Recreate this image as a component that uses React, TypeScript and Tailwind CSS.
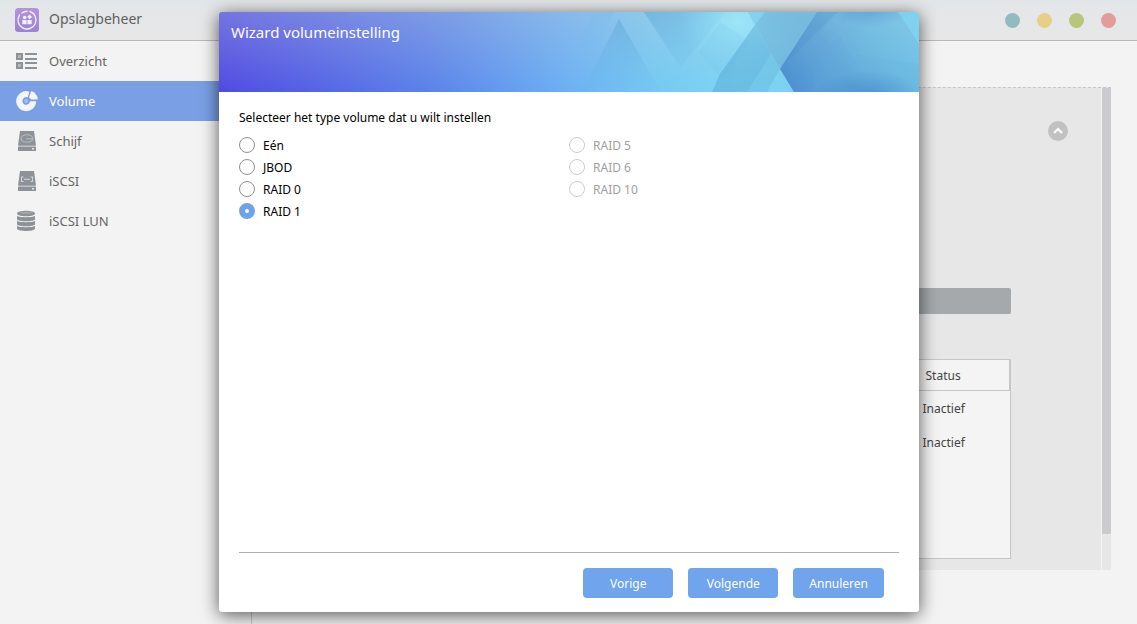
import React, { useState } from 'react';

const NAV_ITEMS = [
  { id: 'overview', label: 'Overzicht' },
  { id: 'volume', label: 'Volume' },
  { id: 'disk', label: 'Schijf' },
  { id: 'iscsi', label: 'iSCSI' },
  { id: 'lun', label: 'iSCSI LUN' },
];

const RAID_COLUMNS = [
  [
    { id: 'single', label: 'Eén', disabled: false },
    { id: 'jbod', label: 'JBOD', disabled: false },
    { id: 'raid0', label: 'RAID 0', disabled: false },
    { id: 'raid1', label: 'RAID 1', disabled: false },
  ],
  [
    { id: 'raid5', label: 'RAID 5', disabled: true },
    { id: 'raid6', label: 'RAID 6', disabled: true },
    { id: 'raid10', label: 'RAID 10', disabled: true },
  ],
];

const AppLogo = () => (
  <svg viewBox="0 0 24 24" className="w-6 h-6">
    <defs>
      <linearGradient id="logo" x1="0" y1="0" x2="0" y2="1">
        <stop offset="0" stopColor="#b493da" />
        <stop offset="1" stopColor="#9a82d2" />
      </linearGradient>
    </defs>
    <rect width="24" height="24" rx="3.5" fill="url(#logo)" />
    <path
      d="M15 3.5A9 9 0 1 1 4.500 7M7 5A8.600 8.600 0 0 1 12 3.200"
      fill="none"
      stroke="#f1eafa"
      strokeWidth="1.4"
      strokeLinecap="round"
    />
    <circle cx="9.700" cy="9.500" r="1.8" fill="#f4effb" />
    <path d="M14.600 6.500l2.400 2.400-2.400 2.400-2.400-2.400z" fill="#f4effb" />
    <rect x="7.300" y="12" width="4.300" height="4.300" rx=".5" fill="#f4effb" />
    <rect x="12.400" y="12" width="4.300" height="4.300" rx=".5" fill="#f4effb" />
  </svg>
);

const NavIcon = ({ id }: { id: string }) => {
  if (id === 'overview') {
    return (
      <svg viewBox="0 0 24 24" className="w-6 h-6">
        <path
          d="M1 4h7v7H1zM1 13h7v7H1zM10 4h12v2H10zM10 9h12v2H10zM10 13h12v2H10zM10 18h12v2H10z"
          fill="#8c9298"
        />
        <path d="M3 6h3v3H3zM3 15h3v3H3z" fill="#b4b8bc" />
      </svg>
    );
  }
  if (id === 'volume') {
    return (
      <svg viewBox="0 0 24 24" className="w-6 h-6">
        <path d="M14.500 2.700A10 10 0 1 0 21.200 12.300H15A3.800 3.800 0 1 1 12.600 8.400z" fill="#f3f5f9" />
        <path d="M16.200 2A10 10 0 0 1 22.800 10.400H16.200L14 8.500z" fill="#f3f5f9" />
        <circle cx="11.200" cy="12" r="2" fill="#a9c1ee" />
      </svg>
    );
  }
  if (id === 'lun') {
    return (
      <svg viewBox="0 0 24 24" className="w-6 h-6" fill="#8c9298">
        <path d="M2 4.500C2 .800 20 .800 20 4.500C20 8.200 2 8.200 2 4.500z" />
        <path d="M2 7c3 1.600 15 1.600 18 0v3.500c-1 2.400-17 2.400-18 0z" />
        <path d="M2 12c3 1.600 15 1.600 18 0v3.500c-1 2.400-17 2.400-18 0z" />
        <path d="M2 17c3 1.600 15 1.600 18 0v2.700c-1 3-17 3-18 0z" />
        <ellipse cx="11" cy="3.800" rx="6" ry="1" fill="#a3a8ad" />
      </svg>
    );
  }
  return (
    <svg viewBox="0 0 24 24" className="w-6 h-6">
      <path d="M5 2h14l2 14.800H3z" fill="#8c9298" />
      <rect x="3" y="17.500" width="18" height="4.500" rx=".6" fill="#8c9298" />
      <rect x="17" y="19" width="2" height="1.500" fill="#e9eaeb" />
      {id === 'disk' ? (
        <g fill="none" stroke="#b7bcc0" strokeWidth="1.1">
          <ellipse cx="12" cy="9.500" rx="6" ry="3.700" />
          <path d="M11 9.800h6" />
        </g>
      ) : (
        <path
          d="M8.500 8H6.500v4.500h2M15.500 8h2v4.500h-2M9 10.200h6"
          fill="none"
          stroke="#d3d6d8"
          strokeWidth="1.100"
        />
      )}
    </svg>
  );
};

// Translucent facets laid over the gradient of the wizard banner
const BannerArt = () => (
  <svg viewBox="0 0 700 80" preserveAspectRatio="none" className="absolute inset-0 w-full h-full">
    <defs>
      <linearGradient id="base" x1="0" y1="0" x2="1" y2="0">
        <stop offset="0" stopColor="#4f4be3" />
        <stop offset=".12" stopColor="#5460e5" />
        <stop offset=".3" stopColor="#5b82ea" />
        <stop offset=".5" stopColor="#6bb1f3" />
        <stop offset=".62" stopColor="#75c9f3" />
        <stop offset=".74" stopColor="#7dd4f4" />
        <stop offset="1" stopColor="#6fcaee" />
      </linearGradient>
      <linearGradient id="sheen" x1="0" y1="0" x2="0" y2="1">
        <stop offset="0" stopColor="#c5cdda" stopOpacity=".32" />
        <stop offset="1" stopColor="#c5cdda" stopOpacity="0" />
      </linearGradient>
      <linearGradient id="facet" x1="0" y1="0" x2="0" y2="1">
        <stop offset="0" stopColor="#549fd2" stopOpacity=".4" />
        <stop offset="1" stopColor="#58b2e6" stopOpacity=".05" />
      </linearGradient>
      <linearGradient id="facetLeft" x1="0" y1="0" x2=".8" y2="1">
        <stop offset="0" stopColor="#4d99cf" stopOpacity=".4" />
        <stop offset="1" stopColor="#6cc6ea" stopOpacity=".15" />
      </linearGradient>
      <linearGradient id="deep" x1="0" y1=".7" x2="1" y2=".3">
        <stop offset="0" stopColor="#4787cb" stopOpacity=".85" />
        <stop offset=".4" stopColor="#5596cf" stopOpacity=".65" />
        <stop offset=".8" stopColor="#67b5dd" stopOpacity=".35" />
        <stop offset="1" stopColor="#70c8ec" stopOpacity=".1" />
      </linearGradient>
      <radialGradient id="glow">
        <stop offset="0" stopColor="#a0eafb" stopOpacity=".8" />
        <stop offset="1" stopColor="#8ee4fb" stopOpacity="0" />
      </radialGradient>
      <radialGradient id="shade">
        <stop offset="0" stopColor="#3f80c6" stopOpacity=".7" />
        <stop offset="1" stopColor="#3f80c6" stopOpacity="0" />
      </radialGradient>
    </defs>
    <rect width="700" height="80" fill="url(#base)" />
    <rect width="700" height="80" fill="url(#sheen)" />
    <path d="M400 7L442 80H363z" fill="url(#facet)" />
    <path d="M374 0h22L372 45l-12-18z" fill="url(#facet)" opacity=".2" />
    <path d="M425 0h82l-46 55z" fill="url(#facetLeft)" />
    <ellipse cx="520" cy="10" rx="60" ry="50" fill="url(#glow)" />
    <path d="M480 40l21-30 30 20-28 37-4-5z" fill="#68bfe6" opacity=".12" />
    <path d="M493 80l8-18 35-49 25 44-13 23z" fill="#4d9fd0" opacity=".4" />
    <path d="M528 80l25-40 9 17-13 23z" fill="#80d9f4" opacity=".35" />
    <path d="M529 0h90l-58 57z" fill="#62a5d0" opacity=".5" />
    <path d="M529 0h17l-10 13z" fill="#8adcf5" opacity=".6" />
    <path d="M598 0h102v80H575l-14-23z" fill="url(#deep)" />
    <path d="M618 14l8-14h74v80H632l16-22z" fill="#6bb4dd" opacity=".25" />
    <path d="M594 60l26-38 18 32-24 26h-20z" fill="#62aadb" opacity=".2" />
    <path d="M614 80l24-38 62 10v28z" fill="#65aede" opacity=".18" />
    <ellipse cx="648" cy="84" rx="54" ry="26" fill="url(#shade)" opacity=".85" />
    <ellipse cx="650" cy="-5" rx="46" ry="20" fill="url(#shade)" opacity=".6" />
    <path d="M679 0h21v32z" fill="#80d8f1" opacity=".65" />
  </svg>
);

const WizardDialog = () => {
  const [raid, setRaid] = useState('raid1');

  return (
    <section
      role="dialog"
      aria-label="Wizard volumeinstelling"
      className="w-full max-w-[700px] flex flex-col bg-white rounded-[3px] overflow-hidden shadow-[0_3px_18px_rgba(0,0,0,0.65)]"
    >
      <header className="relative h-20 shrink-0 px-3 py-2">
        <BannerArt />
        <h2 className="relative text-[15px] leading-6 text-white">Wizard volumeinstelling</h2>
      </header>

      <form className="flex-1 flex flex-col px-5 pt-4" onSubmit={(e) => e.preventDefault()}>
        <fieldset className="flex-1">
          <legend className="text-[12px] leading-5 text-black">Selecteer het type volume dat u wilt instellen</legend>
          <div className="grid grid-cols-2 pt-[6px]">
            {RAID_COLUMNS.map((column, index) => (
              <div key={index}>
                {column.map((option) => (
                  <label
                    key={option.id}
                    className="h-[22px] flex items-center gap-2 text-[12px] text-black has-disabled:text-[#a0a0a0]"
                  >
                    <input
                      type="radio"
                      name="raid"
                      value={option.id}
                      checked={raid === option.id}
                      disabled={option.disabled}
                      onChange={() => setRaid(option.id)}
                      className="appearance-none w-4 h-4 rounded-full border border-[#8e9297] bg-white checked:border-[6px] checked:border-[#6ea3eb] disabled:border-[#cccccc]"
                    />
                    <span className="pt-[2px]">{option.label}</span>
                  </label>
                ))}
              </div>
            ))}
          </div>
        </fieldset>

        <footer className="flex justify-end gap-[15px] border-t border-[#aeb0b2] pt-[15px] pr-[15px] pb-[14px]">
          {['Vorige', 'Volgende', 'Annuleren'].map((label) => (
            <button
              key={label}
              type="button"
              className="min-w-[90px] h-[30px] px-4 pt-[2px] rounded bg-[#70a4ec] hover:bg-[#5f95e0] text-[12px] text-white"
            >
              {label}
            </button>
          ))}
        </footer>
      </form>
    </section>
  );
};

const App: React.FC = () => {
  const [active, setActive] = useState('volume');

  return (
    <div className="relative min-h-screen flex flex-col bg-[#f3f3f3] font-['Noto_Sans','Open_Sans',sans-serif]">
      <header className="h-[41px] flex items-center justify-between pl-[15px] pr-[21px] border-b border-[#b9b9b9] bg-linear-to-b from-[#e3e6e9] to-[#e7e7e7]">
        <div className="flex items-center gap-[10px]">
          <AppLogo />
          <h1 className="text-[14px] leading-5 pb-[2px] text-[#606060]">Opslagbeheer</h1>
        </div>
        <div className="flex gap-[17px]">
          <button type="button" aria-label="Help" className="w-[15px] h-[15px] rounded-full bg-[#91bbbf]" />
          <button type="button" aria-label="Minimaliseren" className="w-[15px] h-[15px] rounded-full bg-[#e8cf87]" />
          <button type="button" aria-label="Maximaliseren" className="w-[15px] h-[15px] rounded-full bg-[#b6c77c]" />
          <button type="button" aria-label="Sluiten" className="w-[15px] h-[15px] rounded-full bg-[#e29c99]" />
        </div>
      </header>

      <div className="flex-1 flex">
        <nav className="w-[252px] shrink-0 border-r border-[#c9c9c9]">
          {NAV_ITEMS.map((item) => (
            <button
              key={item.id}
              type="button"
              onClick={() => setActive(item.id)}
              className={`w-full h-10 flex items-center gap-[10px] pl-[15px] text-[13px] ${
                active === item.id ? 'bg-[#7a9fe5] text-white' : 'text-[#666666]'
              }`}
            >
              <NavIcon id={item.id} />
              <span className="pt-[2px]">{item.label}</span>
            </button>
          ))}
        </nav>

        <main className="flex-1 flex pt-[46px] pr-[26px] pb-[54px] pl-5">
          <div className="flex-1 flex bg-[#e7e7e7] border-t border-dashed border-[#c8c8c8]">
            <div className="flex-1 flex flex-col pb-[11px] pr-[90px]">
              <div className="h-[200px] pt-[33px] -mr-[57px] flex justify-end items-start">
                <button
                  type="button"
                  aria-label="Inklappen"
                  className="w-5 h-5 rounded-full bg-[#c1c1c1] flex items-center justify-center"
                >
                  <svg viewBox="0 0 12 12" className="w-3 h-3">
                    <path d="M2 8l4-4 4 4" fill="none" stroke="#fff" strokeWidth="2.200" />
                  </svg>
                </button>
              </div>
              <div className="h-[26px] rounded-[2px] bg-[#a5a9ab]" />
              <div className="flex-1 mt-[45px] border border-[#c6c6c6] bg-[#f4f4f4]">
                <table className="w-full text-left text-[12px] text-[#444444]">
                  <thead>
                    <tr className="h-[30px] border-b border-r border-[#c6c6c6]">
                      <th />
                      <th className="w-[87px] pt-[2px] pl-[3px] font-normal">Status</th>
                    </tr>
                  </thead>
                  <tbody>
                    <tr className="h-[35px]">
                      <td />
                      <td className="pt-[2px]">Inactief</td>
                    </tr>
                    <tr className="h-[34px]">
                      <td />
                      <td className="pt-[2px]">Inactief</td>
                    </tr>
                  </tbody>
                </table>
              </div>
            </div>
            <div className="w-[10px] border-l border-[#f4f4f4]">
              <div className="h-[446px] bg-[#cbcbcf]" />
            </div>
          </div>
        </main>
      </div>

      <div className="absolute inset-0 flex justify-center pt-3 pb-3 pl-[1px]">
        <WizardDialog />
      </div>
    </div>
  );
};

export default App;
